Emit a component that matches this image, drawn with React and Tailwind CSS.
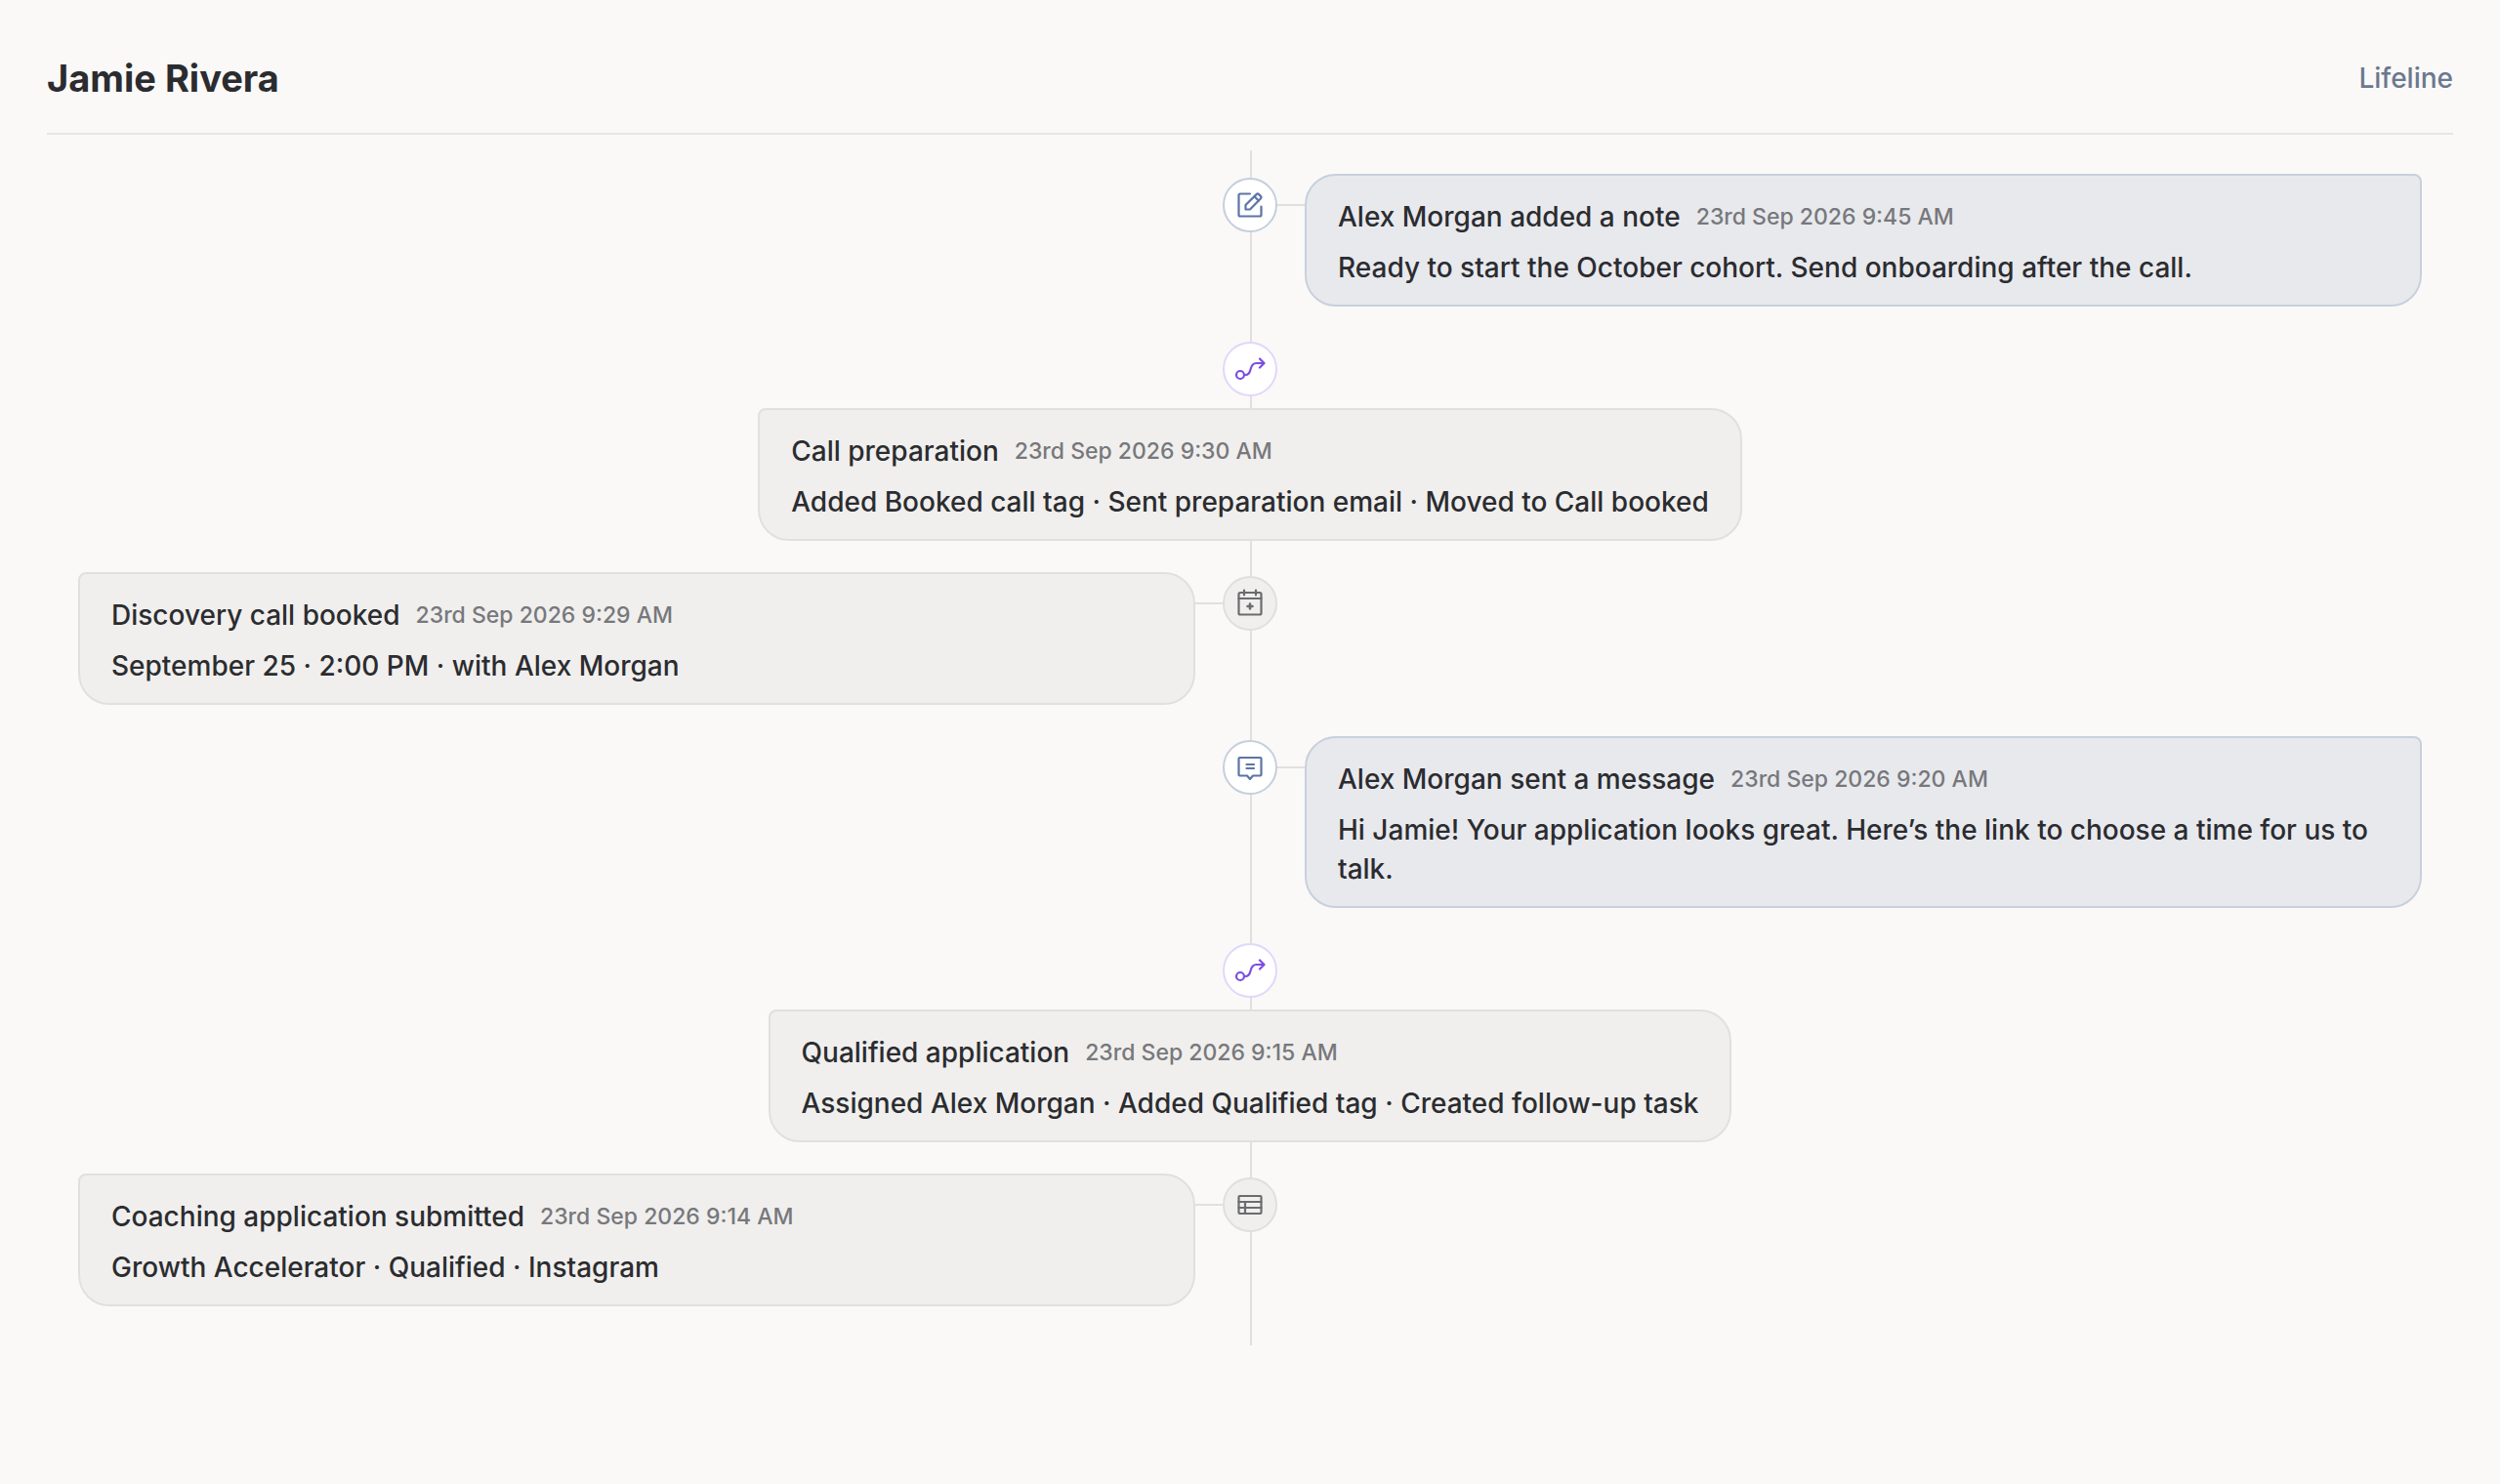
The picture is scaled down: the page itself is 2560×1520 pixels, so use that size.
import clsx from "clsx";

const events = [
  {
    id: 1,
    side: "right",
    icon: "note",
    title: "Alex Morgan added a note",
    date: "23rd Sep 2026 9:45 AM",
    body: "Ready to start the October cohort. Send onboarding after the call.",
  },
  {
    id: 2,
    side: "center",
    icon: "flow",
    title: "Call preparation",
    date: "23rd Sep 2026 9:30 AM",
    body: "Added Booked call tag · Sent preparation email · Moved to Call booked",
  },
  {
    id: 3,
    side: "left",
    icon: "calendar",
    title: "Discovery call booked",
    date: "23rd Sep 2026 9:29 AM",
    body: "September 25 · 2:00 PM · with Alex Morgan",
  },
  {
    id: 4,
    side: "right",
    icon: "message",
    title: "Alex Morgan sent a message",
    date: "23rd Sep 2026 9:20 AM",
    body: "Hi Jamie! Your application looks great. Here’s the link to choose a time for us to talk.",
  },
  {
    id: 5,
    side: "center",
    icon: "flow",
    title: "Qualified application",
    date: "23rd Sep 2026 9:15 AM",
    body: "Assigned Alex Morgan · Added Qualified tag · Created follow-up task",
  },
  {
    id: 6,
    side: "left",
    icon: "form",
    title: "Coaching application submitted",
    date: "23rd Sep 2026 9:14 AM",
    body: "Growth Accelerator · Qualified · Instagram",
  },
];

const icons = {
  note: (
    <>
      <path d="M16 4.500H6A1.500 1.500 0 0 0 4.500 6v20A1.500 1.500 0 0 0 6 27.500h20a1.500 1.500 0 0 0 1.500-1.500v-8.500" />
      <path d="M11.500 20.500v-4.500L22.800 4.900a1.500 1.500 0 0 1 2.100 0l2.200 2.200a1.500 1.500 0 0 1 0 2.100L16 20.500z" />
      <path d="M20.500 7.200l4.300 4.300" />
    </>
  ),
  flow: (
    <>
      <circle cx="6" cy="22" r="4" />
      <path d="M10 22h1.500c3 0 4.200-2 5-5.500.9-4 2.500-6.500 6-6.500H30" />
      <path d="M26 5.500l4.500 4.500-4.500 4.500" />
    </>
  ),
  calendar: (
    <>
      <rect x="4.500" y="5" width="23" height="22.500" rx="1.500" />
      <path d="M4.500 11h23M10 2.500v5M22 2.500v5" />
      <path d="M16 16.500v5M13.500 19h5" strokeWidth="2.500" />
    </>
  ),
  message: (
    <>
      <path d="M5.500 6h21a1 1 0 0 1 1 1v16.500a1 1 0 0 1-1 1H19l-3 3.500-3-3.500H5.500a1 1 0 0 1-1-1V7a1 1 0 0 1 1-1z" />
      <path d="M12.500 13h7.500M12.500 17h7.500" />
    </>
  ),
  form: (
    <>
      <rect x="4.500" y="7" width="23" height="18" rx="1" />
      <path d="M4.500 13h23M4.500 19h23M11 13v12" />
    </>
  ),
};

const nodeStyles = {
  left: "border-[#dfdfdd] bg-[#f0efed] text-[#6b6c70]",
  right: "border-[#c5cfdd] bg-white text-[#5b76a6]",
  center: "border-[#e0d8fa] bg-white text-[#7c4fe0]",
};

function Node({ side, icon }) {
  return (
    <span className={clsx("flex size-14 shrink-0 items-center justify-center rounded-full border-2", nodeStyles[side])}>
      <svg viewBox="0 0 32 32" fill="none" stroke="currentColor" strokeWidth="2.200" strokeLinecap="round" strokeLinejoin="round" className="size-8" aria-hidden="true">
        {icons[icon]}
      </svg>
    </span>
  );
}

function Card({ event }) {
  const own = event.side === "right";

  return (
    <article
      className={clsx(
        "border-2 px-8 pt-[22px] pb-[18px]",
        own
          ? "rounded-[32px] rounded-tr-lg border-[#c8d0dd] bg-[#e8e9ed]"
          : "rounded-[32px] rounded-tl-lg border-[#e0e0de] bg-[#f0efed]"
      )}
    >
      <div className="flex items-center gap-4">
        <h2 className="text-[28px] leading-10 font-medium">{event.title}</h2>
        <time className="text-[23px] leading-10 font-medium text-[#77787c]">{event.date}</time>
      </div>
      <p className="mt-3 text-[28px] leading-10 font-medium">{event.body}</p>
    </article>
  );
}

function TimelineItem({ event }) {
  if (event.side === "center") {
    return (
      <li className="relative flex flex-col items-center gap-3 pt-1">
        <Node side={event.side} icon={event.icon} />
        <Card event={event} />
      </li>
    );
  }

  const left = event.side === "left";

  return (
    <li className="relative grid grid-cols-[1fr_112px_1fr] items-start">
      <div>{left && <Card event={event} />}</div>
      <div className="flex items-center pt-1">
        <span className={clsx("h-0.5 flex-1", left && "bg-[#e0e0de]")} />
        <Node side={event.side} icon={event.icon} />
        <span className={clsx("h-0.5 flex-1", !left && "bg-[#e0e0de]")} />
      </div>
      <div>{!left && <Card event={event} />}</div>
    </li>
  );
}

function App() {
  return (
    <main className="min-h-screen bg-[#faf9f7] px-12 pb-12 font-['Inter','Liberation_Sans',sans-serif] text-[#2b2c30]">
      <header className="flex items-center justify-between border-b-2 border-[#e6e6e4] pt-14 pb-8">
        <h1 className="text-[38px] leading-12 font-bold">Jamie Rivera</h1>
        <span className="text-[28px] leading-10 font-medium text-[#6b7890]">Lifeline</span>
      </header>

      <ol className="relative mx-8 mt-4 flex flex-col gap-8 pt-6 pb-10 before:absolute before:inset-y-0 before:left-1/2 before:w-0.5 before:bg-[#e0e0de]">
        {events.map((event) => (
          <TimelineItem key={event.id} event={event} />
        ))}
      </ol>
    </main>
  );
}

export default App;
